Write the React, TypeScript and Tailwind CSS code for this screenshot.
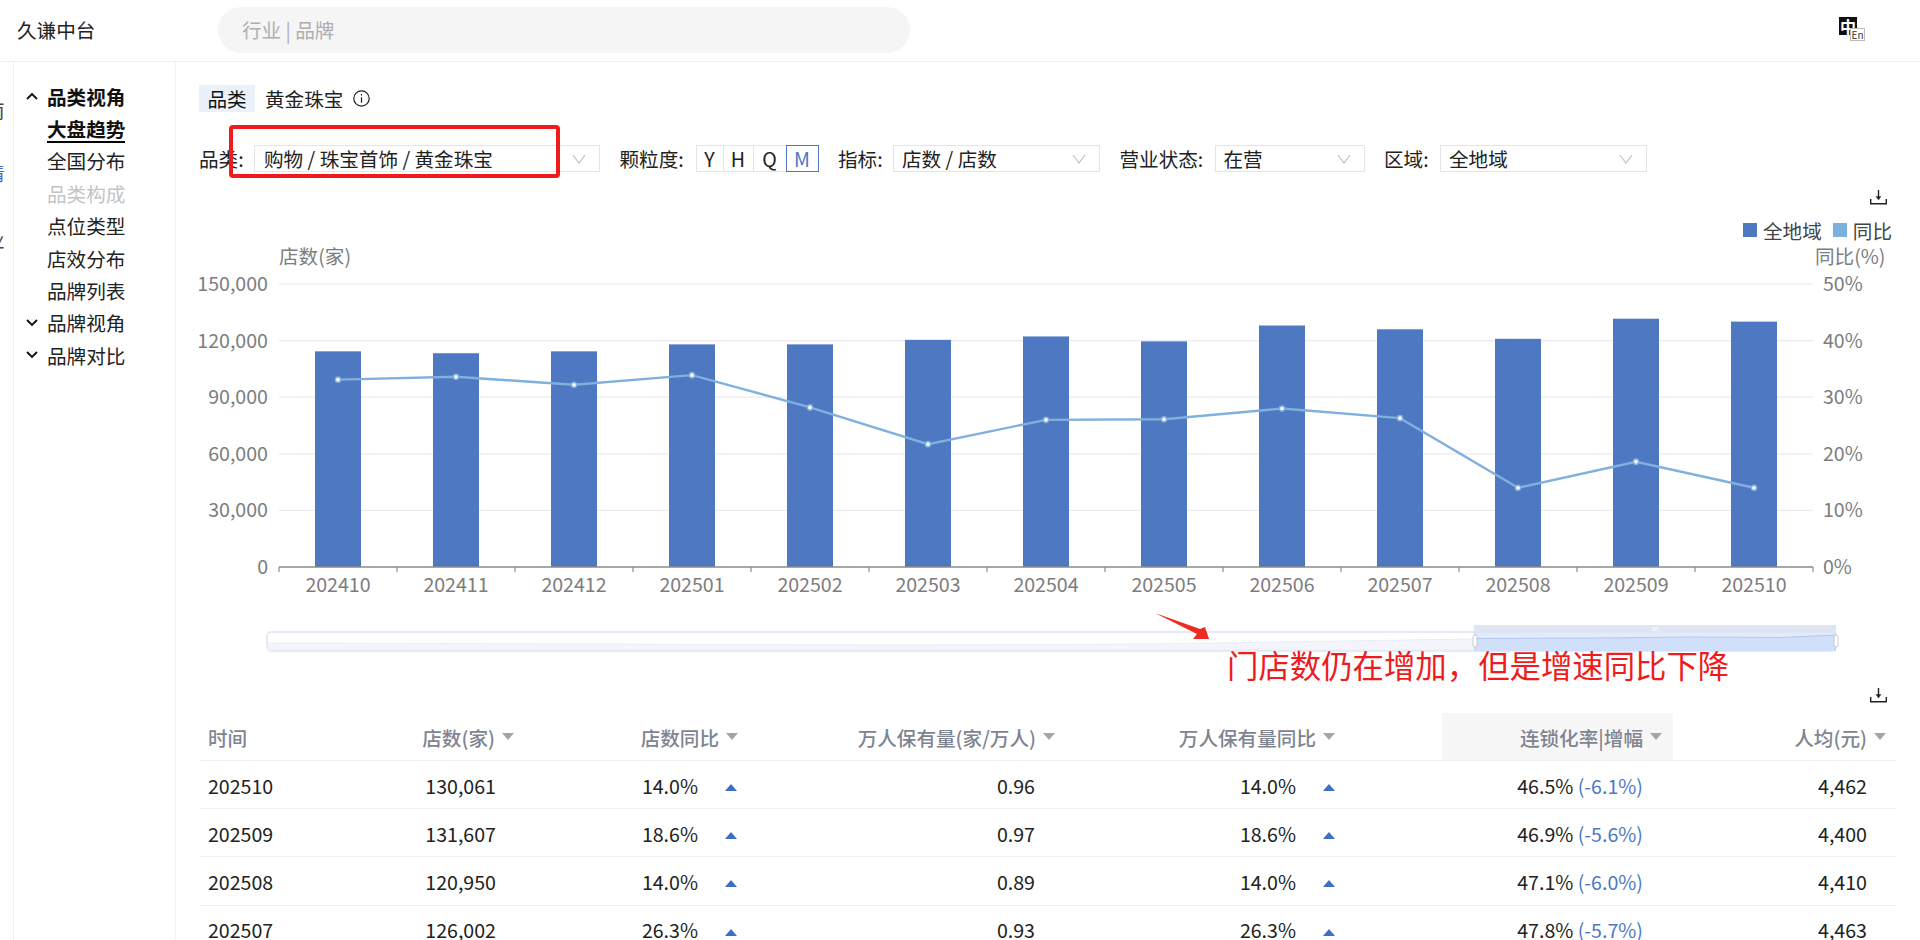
import React from "react";

const bars = [114300, 113300, 114300, 118000, 118000, 120400, 122200, 119600, 128000, 126002, 120950, 131607, 130061];
const pct = [33.1, 33.6, 32.2, 33.9, 28.2, 21.7, 26, 26.1, 28, 26.3, 14, 18.6, 14];
const months = ["202410", "202411", "202412", "202501", "202502", "202503", "202504", "202505", "202506", "202507", "202508", "202509", "202510"];
const yLeft = ["150,000", "120,000", "90,000", "60,000", "30,000", "0"];
const yRight = ["50%", "40%", "30%", "20%", "10%", "0%"];
const Y0 = 567;
const PLOT = 283;
const cx = (i: number) => 338 + 118 * i;
const barY = (v: number) => Y0 - (v / 150000) * PLOT;
const pctY = (v: number) => Y0 - (v / 50) * PLOT;

const rows = [
  ["202510", "130,061", "14.0%", "0.96", "14.0%", "46.5%", "(-6.1%)", "4,462"],
  ["202509", "131,607", "18.6%", "0.97", "18.6%", "46.9%", "(-5.6%)", "4,400"],
  ["202508", "120,950", "14.0%", "0.89", "14.0%", "47.1%", "(-6.0%)", "4,410"],
  ["202507", "126,002", "26.3%", "0.93", "26.3%", "47.8%", "(-5.7%)", "4,463"],
];

const gridCols = "grid grid-cols-[131px_200px_220px_320px_372px_231px_223px]";

function Chevron() {
  return (
    <svg width="14" height="10" viewBox="0 0 14 10" fill="none" stroke="#bdbdbd" strokeWidth="1.1">
      <path d="M1 1 L7 9 L13 1" />
    </svg>
  );
}

function SortDown() {
  return (
    <svg width="12" height="7" viewBox="0 0 12 7" className="mb-[3px] shrink-0">
      <path d="M0 0 H12 L6 7 Z" fill="#a6a6a6" />
    </svg>
  );
}

function Up() {
  return (
    <svg width="12" height="7" viewBox="0 0 12 7" className="mt-[5px] shrink-0">
      <path d="M0 7 H12 L6 0 Z" fill="#3f6cc7" />
    </svg>
  );
}

function Download() {
  return (
    <svg width="17" height="15" viewBox="0 0 17 15" fill="none" stroke="#222" strokeWidth="1.4">
      <path d="M8.5 0 V8" />
      <path d="M6 6.5 L8.5 10 L11 6.5 Z" fill="#222" strokeWidth="0.4" />
      <path d="M0.7 9 V13.8 H16.3 V9" />
    </svg>
  );
}

function Select({ w, text, pl = "pl-[8px]" }: { w: string; text: string; pl?: string }) {
  return (
    <div className={`${w} h-[27px] border border-[#e4e4e4] flex items-center justify-between ${pl} pr-[13px] text-[#222]`}>
      <span>{text}</span>
      <Chevron />
    </div>
  );
}

function NavChevron({ up }: { up?: boolean }) {
  return (
    <svg width="12" height="8" viewBox="0 0 12 8" fill="none" stroke="#111" strokeWidth="1.9" className="mr-[9px] shrink-0">
      <path d={up ? "M1 7 L6 2 L11 7" : "M1 1 L6 6 L11 1"} />
    </svg>
  );
}

function Nav({ label, head, up, bold, active, muted }: { label: string; head?: boolean; up?: boolean; bold?: boolean; active?: boolean; muted?: boolean }) {
  return (
    <div className={`h-[32.4px] flex items-center ${head ? "pl-[12px]" : "pl-[33px]"}`}>
      {head && <NavChevron up={up} />}
      {active ? (
        <span className="border-b-2 border-black leading-[24px] mt-[3px] font-bold text-[#111]">{label}</span>
      ) : (
        <span className={`${bold ? "font-bold text-[#111]" : muted ? "text-[#c4c4c4]" : "text-[#222]"}`}>{label}</span>
      )}
    </div>
  );
}

function HeadCell({ label, pr, hl }: { label: string; pr: string; hl?: boolean }) {
  return (
    <div className={`flex items-center justify-end gap-[7px] pt-[2px] ${pr} ${hl ? "bg-[#f7f7f7]" : ""}`}>
      <span>{label}</span>
      <SortDown />
    </div>
  );
}

export default function App() {
  return (
    <div className="relative w-[1920px] h-[940px] overflow-hidden bg-white text-[19.6px] leading-[27px] text-[#222] font-['Noto_Sans_CJK_SC','Noto_Sans',sans-serif]">
      <header className="h-[62px] border-b border-[#eeeeee] flex items-center pb-[2px]">
        <div className="w-[218px] pl-[17px] text-[#222]">久谦中台</div>
        <div className="w-[692px] h-[46px] rounded-full bg-[#f5f5f5] flex items-center pl-[24px] text-[#aeaeae]">行业 | 品牌</div>
        <div className="ml-[929px] relative w-[25px] h-[24px] mb-[2px]">
          <div className="w-[18px] h-[18px] bg-[#111] text-white text-[16px] leading-[18px] text-center font-bold">中</div>
          <div className="absolute left-[11px] top-[11px] w-[15px] h-[13px] border border-[#bbb] bg-white text-[10px] leading-[12px] text-center text-[#333]">En</div>
        </div>
      </header>

      <div className="flex h-[878px]">
        <aside className="w-[14px] shrink-0 border-r border-[#f0f0f0] overflow-hidden pt-[34px] flex flex-col">
          <div className="h-[27px] ml-[-15px] text-[#444]">南</div>
          <div className="h-[27px] mt-[36px] ml-[-15px] text-[#3f6cc7]">情</div>
          <div className="h-[27px] mt-[40px] ml-[-15px] text-[#444]">业</div>
        </aside>

        <nav className="w-[162px] shrink-0 border-r border-[#f2f2f2] pt-[18px]">
          <Nav label="品类视角" head up bold />
          <Nav label="大盘趋势" active />
          <Nav label="全国分布" />
          <Nav label="品类构成" muted />
          <Nav label="点位类型" />
          <Nav label="店效分布" />
          <Nav label="品牌列表" />
          <Nav label="品牌视角" head />
          <Nav label="品牌对比" head />
        </nav>

        <main className="flex-1 min-w-0 pt-[23px] pl-[23px]">
          <div className="h-[27px] flex items-center">
            <span className="w-[56px] h-[27px] bg-[#eaf1f9] text-center text-[#111]">品类</span>
            <span className="ml-[10px] text-[#222]">黄金珠宝</span>
            <svg width="17" height="17" viewBox="0 0 17 17" fill="none" stroke="#222" strokeWidth="1.2" className="ml-[10px]">
              <circle cx="8.5" cy="8.5" r="7.7" />
              <path d="M8.5 7.3 V12.8 M8.5 4 V5.6" />
            </svg>
          </div>

          <div className="mt-[33px] h-[27px] flex items-center gap-[19.5px]">
            <div className="flex items-center">
              <span className="w-[55px]">品类:</span>
              <Select w="w-[346px]" text="购物 / 珠宝首饰 / 黄金珠宝" pl="pl-[9px]" />
            </div>
            <div className="flex items-center">
              <span className="w-[76px]">颗粒度:</span>
              <div className="flex h-[27px]">
                <span className="w-[28px] border border-[#e4e4e4] text-center leading-[25px]">Y</span>
                <span className="w-[30px] border-y border-r border-[#e4e4e4] text-center leading-[25px]">H</span>
                <span className="w-[32px] border-y border-[#e4e4e4] text-center leading-[25px]">Q</span>
                <span className="w-[33px] border border-[#4e78c1] text-[#4e78c1] text-center leading-[25px]">M</span>
              </div>
            </div>
            <div className="flex items-center">
              <span className="w-[55px]">指标:</span>
              <Select w="w-[207px]" text="店数 / 店数" />
            </div>
            <div className="flex items-center">
              <span className="w-[95px]">营业状态:</span>
              <Select w="w-[150px]" text="在营" />
            </div>
            <div className="flex items-center">
              <span className="w-[56px]">区域:</span>
              <Select w="w-[207px]" text="全地域" />
            </div>
          </div>

          <div className="mt-[18px] h-[14px] flex justify-end pr-[33px]">
            <Download />
          </div>

          <div className="mt-[16px] h-[20px] flex items-center justify-end pr-[28px] text-[#444]">
            <span className="w-[14px] h-[14px] bg-[#4e78c1]" />
            <span className="ml-[6px]">全地域</span>
            <span className="ml-[11px] w-[14px] h-[14px] bg-[#7cb0dd]" />
            <span className="ml-[6px]">同比</span>
          </div>

          <svg width="1721" height="443" viewBox="199 245 1721 443" className="mt-[5px] block">
            <g fill="#7d7d7d" fontSize="19.6">
              <text x="279" y="264">店数(家)</text>
              <text x="1815" y="264">同比(%)</text>
            </g>
            {yLeft.map((t, i) => (
              <g key={t}>
                {i < 5 && <line x1="279" x2="1813" y1={284 + i * 56.6} y2={284 + i * 56.6} stroke="#e8ebf1" strokeWidth="1.2" />}
                <text x="268" y={291 + i * 56.6} textAnchor="end" fill="#7d7d7d" fontSize="19.6">{t}</text>
                <text x="1823" y={291 + i * 56.6} fill="#7d7d7d" fontSize="19.6">{yRight[i]}</text>
              </g>
            ))}
            {bars.map((v, i) => (
              <rect key={i} x={cx(i) - 23} y={barY(v)} width="46" height={Y0 - barY(v)} fill="#4e78c1" />
            ))}
            <polyline
              points={pct.map((v, i) => `${cx(i)},${pctY(v)}`).join(" ")}
              fill="none"
              stroke="#7fb0de"
              strokeWidth="2.4"
            />
            {pct.map((v, i) => (
              <circle key={i} cx={cx(i)} cy={pctY(v)} r="2.6" fill="#ffffff" stroke="#7fb0de" strokeWidth="1.5" />
            ))}
            <line x1="279" x2="1813" y1={Y0} y2={Y0} stroke="#8a8a8a" strokeWidth="1.6" />
            {Array.from({ length: 14 }).map((_, i) => (
              <line key={i} x1={279 + 118 * i} x2={279 + 118 * i} y1={Y0} y2={Y0 + 5} stroke="#8a8a8a" strokeWidth="1.2" />
            ))}
            {months.map((m, i) => (
              <text key={m} x={cx(i)} y="592" textAnchor="middle" fill="#7d7d7d" fontSize="19.6">{m}</text>
            ))}

            <rect x="267" y="632" width="1569" height="19" rx="4" fill="#ffffff" stroke="#dde3f3" strokeWidth="1.4" />
            <path d="M268 643 L900 645 L1150 644 L1474 639 L1474 650 L268 650 Z" fill="#f3f5fb" stroke="#e9ecf5" strokeWidth="1" />
            <rect x="1474" y="625" width="362" height="8" fill="#dfe5f2" />
            <rect x="1474" y="633" width="362" height="18" fill="#e3eafa" />
            <path d="M1474 638.5 L1600 638 L1690 637 L1780 637.5 L1836 635 L1836 651 L1474 651 Z" fill="#d0dffa" stroke="none" />
            <path d="M1474 638.5 L1600 638 L1690 637 L1780 637.5 L1836 635" fill="none" stroke="#b4c8ee" strokeWidth="1" />
            <path d="M1475 633 V651 M1835.5 633 V651" stroke="#c3cbdc" strokeWidth="0.8" />
            <rect x="1473" y="635" width="4" height="12" rx="2" fill="#ffffff" stroke="#b9c2d4" strokeWidth="0.8" />
            <rect x="1834" y="635" width="4" height="12" rx="2" fill="#ffffff" stroke="#b9c2d4" strokeWidth="0.8" />
            <path d="M1653 627 V631 M1655 627 V631 M1657 627 V631" stroke="#ffffff" strokeWidth="0.8" />
          </svg>

          <div className="h-[15px] flex justify-end pr-[33px]">
            <Download />
          </div>

          <div className="mt-[10px] w-[1697px] text-[#222]">
            <div className={`${gridCols} h-[48px] border-b border-[#f0f0f0] font-medium text-[#7e8490]`}>
              <div className="flex items-center pl-[9px] pt-[2px]">时间</div>
              <HeadCell label="店数(家)" pr="pr-[16px]" />
              <HeadCell label="店数同比" pr="pr-[12px]" />
              <HeadCell label="万人保有量(家/万人)" pr="pr-[15px]" />
              <HeadCell label="万人保有量同比" pr="pr-[107px]" />
              <HeadCell label="连锁化率|增幅" pr="pr-[11px]" hl />
              <HeadCell label="人均(元)" pr="pr-[10px]" />
            </div>
            {rows.map((r) => (
              <div key={r[0]} className={`${gridCols} h-[48.2px] border-b border-[#f1f1f1] items-center pt-[1px]`}>
                <div className="pl-[9px]">{r[0]}</div>
                <div className="text-right pr-[34px]">{r[1]}</div>
                <div className="flex items-center justify-end gap-[27px] pr-[13px]">
                  <span>{r[2]}</span>
                  <Up />
                </div>
                <div className="text-right pr-[35px]">{r[3]}</div>
                <div className="flex items-center justify-end gap-[27px] pr-[107px]">
                  <span>{r[4]}</span>
                  <Up />
                </div>
                <div className="text-right pr-[30px]">
                  {r[5]} <span className="text-[#4e78c1]">{r[6]}</span>
                </div>
                <div className="text-right pr-[29px]">{r[7]}</div>
              </div>
            ))}
          </div>
        </main>
      </div>

      <div className="absolute left-[229px] top-[125px] w-[331px] h-[53px] border-[4px] border-[#ee1c1c] rounded-[4px]" />
      <svg width="70" height="40" viewBox="1150 606 70 40" className="absolute left-[1150px] top-[606px]">
        <path d="M1155 613 L1200 629 L1205 627 L1209 639 L1193 639 L1197 634 Z" fill="#ee2a22" />
      </svg>
      <div className="absolute left-[1227px] top-[645px] text-[31.4px] leading-[40px] text-[#ee1c1c] whitespace-nowrap">{"门店数仍在增加\uFF0C但是增速同比下降"}</div>
    </div>
  );
}
